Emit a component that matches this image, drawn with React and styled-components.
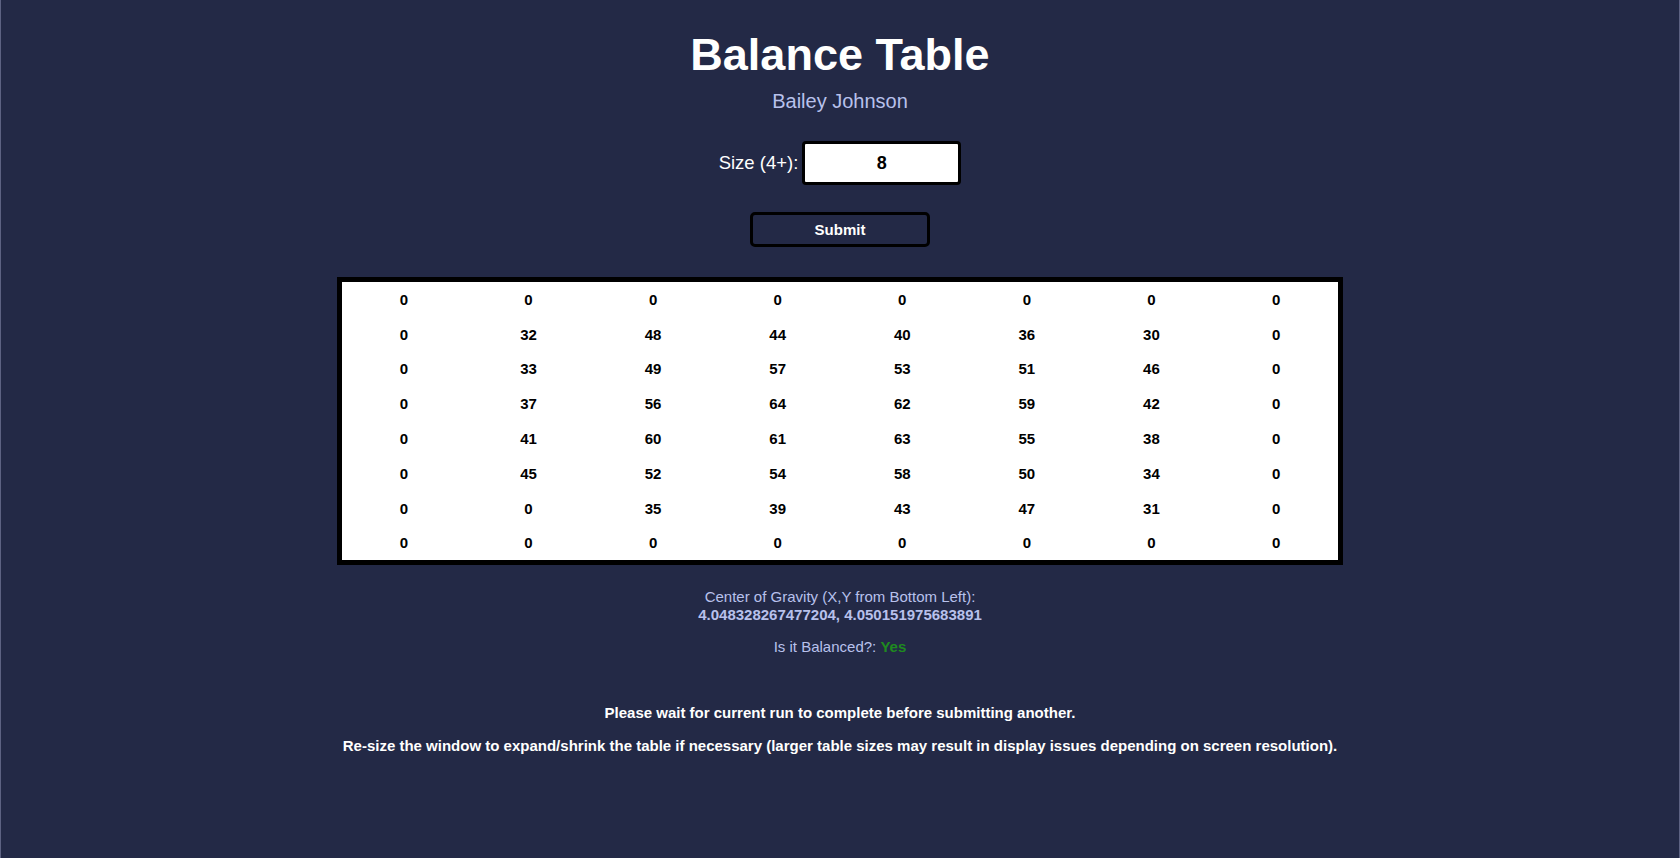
import React, { useState } from 'react'
import styled, { createGlobalStyle } from 'styled-components'

const GlobalStyle = createGlobalStyle`
  html, body {
    margin: 0;
    padding: 0;
    background-color: #232946;
  }

  body {
    font-family: "Liberation Sans", Arial, Helvetica, sans-serif;
  }
`

const grid = [
  [0, 0, 0, 0, 0, 0, 0, 0],
  [0, 32, 48, 44, 40, 36, 30, 0],
  [0, 33, 49, 57, 53, 51, 46, 0],
  [0, 37, 56, 64, 62, 59, 42, 0],
  [0, 41, 60, 61, 63, 55, 38, 0],
  [0, 45, 52, 54, 58, 50, 34, 0],
  [0, 0, 35, 39, 43, 47, 31, 0],
  [0, 0, 0, 0, 0, 0, 0, 0],
]

const App = () => {
  const [size, setSize] = useState('8')

  return (
    <Page>
      <GlobalStyle />
      <Title>Balance Table</Title>
      <Author>Bailey Johnson</Author>

      <SizeRow>
        <SizeLabel htmlFor='size'>Size (4+):</SizeLabel>
        <SizeInput id='size' type='text' value={size} onChange={e => setSize(e.target.value)} />
      </SizeRow>

      <SubmitButton type='button'>Submit</SubmitButton>

      <Table>
        <tbody>
          {grid.map((row, r) => (
            <tr key={r}>
              {row.map((value, c) => (
                <Cell key={c}>{value}</Cell>
              ))}
            </tr>
          ))}
        </tbody>
      </Table>

      <Results>
        <ResultLine>Center of Gravity (X,Y from Bottom Left):</ResultLine>
        <ResultLine bold>4.048328267477204, 4.050151975683891</ResultLine>
        <Balanced>
          Is it Balanced?: <Yes>Yes</Yes>
        </Balanced>
      </Results>

      <Notes>
        <Note>Please wait for current run to complete before submitting another.</Note>
        <Note>Re-size the window to expand/shrink the table if necessary (larger table sizes may result in display issues depending on screen resolution).</Note>
      </Notes>
    </Page>
  )
}

const Page = styled.div`
  box-sizing: border-box;
  min-height: 100vh;
  display: flex;
  flex-direction: column;
  align-items: center;
  border-left: 1px solid #5d6282;
  border-right: 1px solid #5d6282;
  background-color: #232946;
  color: #fffffe;
`

const Title = styled.h1`
  margin: 29px 0 0;
  font-size: 45px;
  line-height: 51px;
  font-weight: 700;
  color: #fffffe;
`

const Author = styled.div`
  margin-top: 10px;
  font-size: 20px;
  line-height: 23px;
  color: #b8c1ec;
`

const SizeRow = styled.div`
  margin-top: 28px;
  display: flex;
  align-items: center;
  gap: 4px;
`

const SizeLabel = styled.label`
  font-size: 18.5px;
  line-height: 22px;
  color: #fffffe;
`

const SizeInput = styled.input`
  box-sizing: border-box;
  width: 159px;
  height: 44px;
  border: 3px solid #000;
  border-radius: 4px;
  background: #fff;
  text-align: center;
  font-family: "Liberation Sans", Arial, sans-serif;
  font-size: 18px;
  font-weight: 700;
  color: #000;
  outline: none;
`

const SubmitButton = styled.button`
  box-sizing: border-box;
  margin-top: 27px;
  width: 180px;
  height: 35px;
  border: 3px solid #000;
  border-radius: 5px;
  background-color: #232946;
  color: #fffffe;
  font-family: "Liberation Sans", Arial, sans-serif;
  font-size: 15px;
  font-weight: 700;
  cursor: pointer;
`

const Table = styled.table`
  box-sizing: border-box;
  margin-top: 30px;
  width: 60%;
  table-layout: fixed;
  border: 5px solid #000;
  border-spacing: 0;
  background-color: #fff;
`

const Cell = styled.td`
  height: 34.8px;
  padding: 0;
  text-align: center;
  font-size: 15px;
  font-weight: 700;
  color: #000;
`

const Results = styled.div`
  margin-top: 23px;
  display: flex;
  flex-direction: column;
  align-items: center;
`

const ResultLine = styled.div`
  font-size: 15px;
  line-height: 18px;
  color: #b8c1ec;
  font-weight: ${props => (props.bold ? 700 : 400)};
`

const Balanced = styled.div`
  margin-top: 14px;
  font-size: 15px;
  line-height: 18px;
  color: #b8c1ec;
`

const Yes = styled.span`
  color: #1f8a1f;
  font-weight: 700;
`

const Notes = styled.div`
  margin-top: 48px;
  display: flex;
  flex-direction: column;
  align-items: center;
  gap: 15px;
`

const Note = styled.div`
  font-size: 15px;
  line-height: 18px;
  font-weight: 700;
  color: #fffffe;
`

export default App
